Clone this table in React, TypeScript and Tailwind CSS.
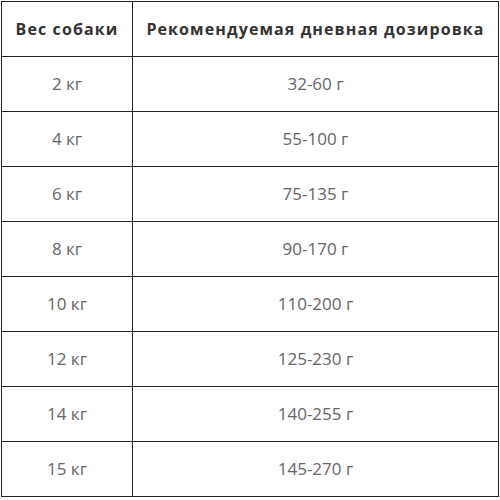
import React from 'react';

const rows = [
  ['2 кг', '32-60 г'],
  ['4 кг', '55-100 г'],
  ['6 кг', '75-135 г'],
  ['8 кг', '90-170 г'],
  ['10 кг', '110-200 г'],
  ['12 кг', '125-230 г'],
  ['14 кг', '140-255 г'],
  ['15 кг', '145-270 г'],
];

export default function App() {
  return (
    <div className="w-[500px] h-[500px] bg-white pl-px pt-px" style={{ fontFamily: '"Open Sans", "Liberation Sans", sans-serif' }}>
      <table className="w-[498px] border-collapse border border-[#222]">
        <thead>
          <tr className="h-[55px]">
            <th className="w-[131px] border border-[#222] text-[16px] font-bold tracking-[1.1px] text-[#333] text-center">Вес собаки</th>
            <th className="border border-[#222] text-[16px] font-bold tracking-[1.1px] text-[#333] text-center">Рекомендуемая дневная дозировка</th>
          </tr>
        </thead>
        <tbody>
          {rows.map(([w, d]) => (
            <tr key={w} className="h-[55px]">
              <td className="border border-[#222] text-center text-[17px] font-normal text-[#666]">{w}</td>
              <td className="border border-[#222] text-center text-[17px] font-normal text-[#666]">{d}</td>
            </tr>
          ))}
        </tbody>
      </table>
    </div>
  );
}
